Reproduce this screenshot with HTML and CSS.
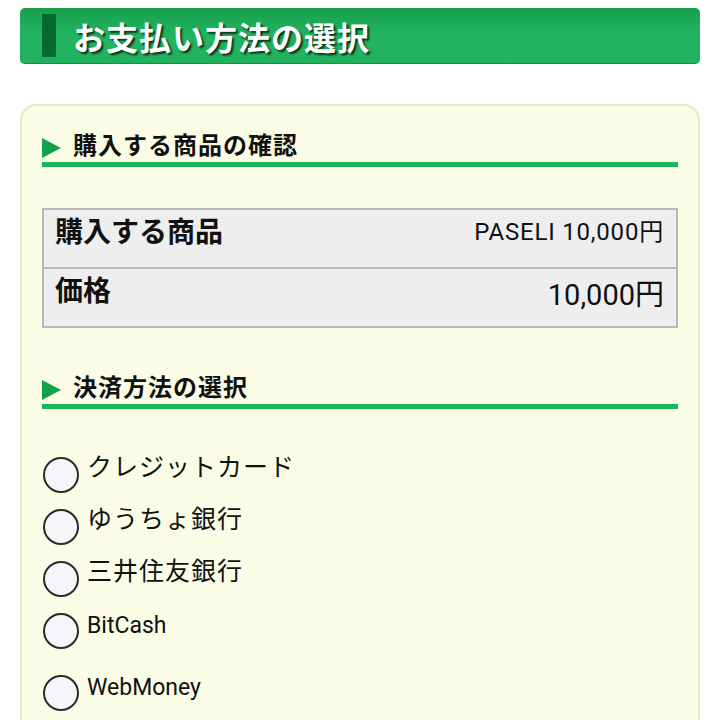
FILE: index.html
```html
<!DOCTYPE html>
<html lang="ja">
<head>
<meta charset="utf-8">
<link rel="stylesheet" href="styles.css">
</head>
<body>
<header class="page-head">
  <span class="head-bar"></span>
  <h1 class="head-title">お支払い方法の選択</h1>
</header>
<main class="card">
  <section class="sec">
    <h2 class="sec-title"><span class="tri"></span>購入する商品の確認</h2>
    <div class="table">
      <div class="row row1">
        <div class="th">購入する商品</div>
        <div class="td td1">PASELI 10,000円</div>
      </div>
      <div class="row row2">
        <div class="th">価格</div>
        <div class="td td2">10,000円</div>
      </div>
    </div>
  </section>
  <section class="sec sec2">
    <h2 class="sec-title"><span class="tri"></span>決済方法の選択</h2>
    <ul class="opts">
      <li class="opt"><span class="radio"></span><span class="lbl">クレジットカード</span></li>
      <li class="opt"><span class="radio"></span><span class="lbl">ゆうちょ銀行</span></li>
      <li class="opt"><span class="radio"></span><span class="lbl">三井住友銀行</span></li>
      <li class="opt"><span class="radio"></span><span class="lbl lat">BitCash</span></li>
      <li class="opt opt-wm"><span class="radio"></span><span class="lbl lat">WebMoney</span></li>
    </ul>
  </section>
</main>
</body>
</html>
```
FILE: styles.css
```css
html, body {
  margin: 0;
  padding: 0;
  background: #ffffff;
  font-family: "Noto Sans CJK JP", "Noto Sans", sans-serif;
  color: #111;
}
body {
  width: 720px;
  height: 720px;
  overflow: hidden;
}
.page-head {
  margin: 8px 20px 0 20px;
  height: 56px;
  border-radius: 5px;
  background: linear-gradient(180deg, #17a04b 0%, #22b461 50%, #20b25f 100%);
  display: flex;
  align-items: center;
  padding-left: 22px;
  box-sizing: border-box;
  border-bottom: 1px solid #13934a;
}
.head-bar {
  width: 14px;
  height: 43px;
  background: #07682f;
  flex: none;
}
.head-title {
  margin: 0 0 0 17px;
  font-size: 32px;
  font-weight: bold;
  color: #ffffff;
  line-height: 1;
  letter-spacing: 1px;
  text-shadow: 2px 2px 2px #0a3519;
}
.card {
  margin: 40px 20px 0 20px;
  background: #fafce5;
  border: 2px solid #e6e9bd;
  border-radius: 16px;
  padding: 25px 20px 40px 20px;
  height: 700px;
  box-sizing: border-box;
}
.sec-title {
  margin: 0;
  position: relative;
  font-size: 24px;
  font-weight: bold;
  line-height: 26px;
  padding-left: 31px;
  padding-bottom: 5px;
  border-bottom: 5px solid #1ab45a;
  letter-spacing: 1px;
}
.tri {
  position: absolute;
  left: 0;
  top: 7px;
  width: 0;
  height: 0;
  border-top: 10px solid transparent;
  border-bottom: 10px solid transparent;
  border-left: 19px solid #13a24c;
}
.table {
  margin-top: 41px;
  border: 2px solid #b7b9b5;
  background: #eeeeee;
}
.row {
  display: flex;
  justify-content: space-between;
  align-items: flex-start;
  height: 57px;
  box-sizing: border-box;
  padding: 0 12px 0 11px;
}
.row1 {
  border-bottom: 2px solid #b7b9b5;
  height: 59px;
}
.th {
  font-size: 28px;
  font-weight: bold;
  line-height: 1;
  margin-top: 6px;
}
.td {
  font-family: "Roboto", "Noto Sans CJK JP", sans-serif;
  line-height: 1;
}
.td1 {
  font-size: 24px;
  letter-spacing: 0.8px;
  margin-top: 10px;
}
.td2 {
  font-size: 29px;
  margin-top: 12px;
}
.sec2 {
  margin-top: 45px;
}
.opts {
  list-style: none;
  margin: 48px 0 0 0;
  padding: 0 0 0 1px;
}
.opt {
  display: flex;
  align-items: flex-start;
  gap: 8px;
  margin-bottom: 16px;
}
.opt-wm {
  margin-top: 26px;
}
.radio {
  width: 36px;
  height: 36px;
  box-sizing: border-box;
  border: 2px solid #2a2a2a;
  border-radius: 50%;
  background: #f4f6fa;
  flex: none;
}
.lbl {
  font-size: 25px;
  line-height: 1;
  margin-top: -4px;
  letter-spacing: 1px;
}
.lat {
  font-family: "Roboto", sans-serif;
  font-size: 23px;
  letter-spacing: 0;
  margin-top: 1px;
}
```
